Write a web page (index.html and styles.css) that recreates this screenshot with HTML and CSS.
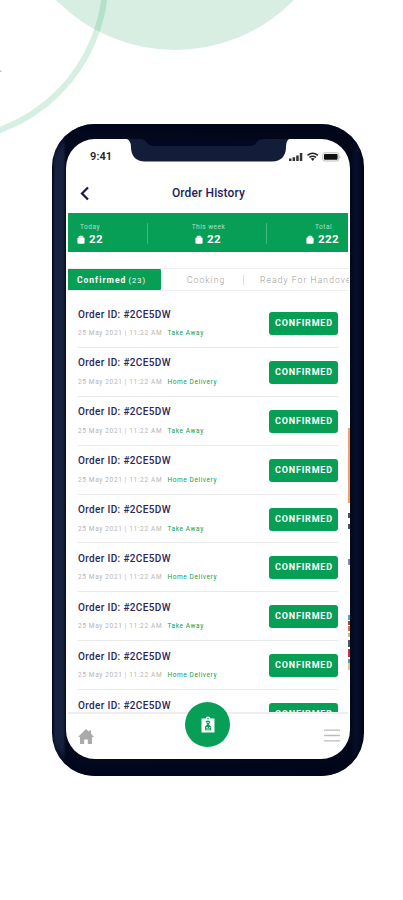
FILE: index.html
```
<!DOCTYPE html>
<html lang="en">
<head>
<meta charset="utf-8">
<title>Order History</title>
<link rel="stylesheet" href="styles.css">
</head>
<body>
<svg class="backdrop" width="403" height="145" viewBox="0 0 403 145">
  <circle cx="175" cy="-116.6" r="166.6" fill="#d8eee3"/>
  <circle cx="-55.5" cy="-21.2" r="161" fill="none" stroke="#079e55" stroke-opacity=".17" stroke-width="6"/>
  <path d="M0 70l2 1.6-2 .5z" fill="#bbb"/>
</svg>
<main class="phone">
  <div class="screen">
    <svg class="notch" width="162" height="23" viewBox="0 0 162 23">
      <path d="M0 0h162q-3 2-3 8c0 9-5 14.500-14 14.500H18C9 22.500 4 17 4 8q0-6-4-8z" fill="#131c38"/>
      <path d="M13 0h125q-7 0-9 4-2 3-6 3H28q-6 0-8-3-2-4-7-4z" fill="#020821"/>
    </svg>
    <div class="status">
      <span class="clock">9:41</span>
      <svg width="52" height="10" viewBox="0 0 52 10">
        <path d="M0 6.500h2.500V9H0zM3.600 5.200h2.500V9H3.600zM7.200 3.500h2.500V9H7.200zM10.800 1h2.500v8h-2.500z" fill="#333"/>
        <path d="M18.500 3.400q5.200-4.300 10.400 0M20.400 5.400q3.300-2.500 6.600 0" fill="none" stroke="#222" stroke-width="1.500"/>
        <path d="M21.700 6.600q2-1.300 4 0l-2 2.400z" fill="#222"/>
        <rect x="33.800" y=".8" width="16" height="8.200" rx="2" fill="#fff" stroke="#aaa" stroke-width=".8"/>
        <rect x="35" y="2" width="13.600" height="5.800" rx="1" fill="#111"/>
        <path d="M50.700 3.500q1.300 1.400 0 2.800z" fill="#777"/>
      </svg>
    </div>
    <header class="title">
      <svg class="back" width="10" height="15" viewBox="0 0 10 15"><path d="M8 1.500L2 7.500l6 6" fill="none" stroke="#1b1646" stroke-width="2.200"/></svg>
      <h1>Order History</h1>
    </header>
    <svg class="defs" width="0" height="0">
      <symbol id="bag" viewBox="0 0 8 9"><path d="M.4 2.800h7.200v4.900q0 1-1 1H1.400q-1 0-1-1z" fill="#fff"/><path d="M1.600 3V1.500Q4-.7 6.400 1.500V3z" fill="#d9f0e4"/></symbol>
    </svg>
    <section class="stats">
      <div class="stat"><small>Today</small><b><svg><use href="#bag"/></svg>22</b></div>
      <div class="stat mid"><small>This week</small><b><svg><use href="#bag"/></svg>22</b></div>
      <div class="stat end"><small>Total</small><b><svg><use href="#bag"/></svg>222</b></div>
    </section>
    <nav class="tabs">
      <div class="tab active">Confirmed <span>(23)</span></div>
      <div class="tab cooking">Cooking</div>
      <div class="tab ready">Ready For Handover</div>
    </nav>
    <section class="orders">
      <article><div><h2>Order ID: #2CE5DW</h2><p>25 May 2021 | 11:22 AM <em>Take Away</em></p></div><span class="badge">CONFIRMED</span></article>
      <article><div><h2>Order ID: #2CE5DW</h2><p>25 May 2021 | 11:22 AM <em>Home Delivery</em></p></div><span class="badge">CONFIRMED</span></article>
      <article><div><h2>Order ID: #2CE5DW</h2><p>25 May 2021 | 11:22 AM <em>Take Away</em></p></div><span class="badge">CONFIRMED</span></article>
      <article><div><h2>Order ID: #2CE5DW</h2><p>25 May 2021 | 11:22 AM <em>Home Delivery</em></p></div><span class="badge">CONFIRMED</span></article>
      <article><div><h2>Order ID: #2CE5DW</h2><p>25 May 2021 | 11:22 AM <em>Take Away</em></p></div><span class="badge">CONFIRMED</span></article>
      <article><div><h2>Order ID: #2CE5DW</h2><p>25 May 2021 | 11:22 AM <em>Home Delivery</em></p></div><span class="badge">CONFIRMED</span></article>
      <article><div><h2>Order ID: #2CE5DW</h2><p>25 May 2021 | 11:22 AM <em>Take Away</em></p></div><span class="badge">CONFIRMED</span></article>
      <article><div><h2>Order ID: #2CE5DW</h2><p>25 May 2021 | 11:22 AM <em>Home Delivery</em></p></div><span class="badge">CONFIRMED</span></article>
      <article><div><h2>Order ID: #2CE5DW</h2></div><span class="badge">CONFIRMED</span></article>
    </section>
    <footer class="bottom">
      <svg width="16" height="15" viewBox="0 0 16 15"><path d="M8 0l3 2.800V1.500h2v3.200L16 8h-2v7H9.800v-4.500H6.200V15H2V8H0z" fill="#aaa"/></svg>
      <svg width="16" height="13" viewBox="0 0 16 13"><path d="M0 1.200h16M0 6.500h16M0 11.800h16" stroke="#bcbcbc" stroke-width="1.300"/></svg>
    </footer>
    <div class="fab">
      <svg width="14" height="17" viewBox="0 0 14 17"><path d="M.5 2.500h4Q5 .5 7 .5t2.500 2h4v14H.5z" fill="#fff"/><circle cx="7" cy="2.700" r=".8" fill="#079e55"/><path d="M4.500 5l2.800-.5L9.500 6 7.800 8.500l2.400 2.300v3.500H4v-3.500l2.200-2.500z" fill="#079e55"/><path d="M6 6.500h2M5 11.500h2M8 11.500h1.500M5 13h4" stroke="#fff" stroke-width=".7"/></svg>
    </div>
    <svg class="edge" width="2" height="242" viewBox="0 0 2 242">
      <path d="M0 0h2v75H0z" fill="#f2a06d"/><path d="M0 85h2v5H0zM0 96h2v5H0z" fill="#48506a"/><path d="M0 131h2v6H0z" fill="#8580bd"/><path d="M0 187h2v5H0z" fill="#3baec3"/><path d="M0 193h2v4H0z" fill="#934b48"/><path d="M0 198h2v5H0z" fill="#d96846"/><path d="M0 205h2v4H0z" fill="#c9ba80"/><path d="M0 212h2v7H0z" fill="#45586d"/><path d="M0 221h2v8H0z" fill="#dc2a3c"/><path d="M0 231h2v4H0z" fill="#5c95a5"/><path d="M0 235h2v7H0z" fill="#d5c99b"/>
    </svg>
  </div>
</main>
</body>
</html>
```
FILE: styles.css
```
* { box-sizing: border-box; }
body { margin: 0; width: 403px; height: 900px; padding: 124px 0 0 52px; background: #fff; font-family: Roboto, sans-serif; overflow: hidden; position: relative; }
.backdrop { position: absolute; left: 0; top: 0; }
.phone { position: relative; width: 312px; height: 652px; padding: 15px 14px 17px; border-radius: 43px; background: linear-gradient(90deg, #020719 0, #18223f 3px, #18223f 11px, #050a1f 14px, #020719 298px, #090f2c 304px, #01051a 312px); box-shadow: inset 0 14px 8px -8px #01061c, inset 0 -16px 8px -8px #01061c; }
.screen { position: relative; height: 620px; border-radius: 29px; background: #fff; overflow: hidden; display: flex; flex-direction: column; }
.notch { position: absolute; left: 61px; top: 0; }
.status { height: 32px; flex: none; padding: 11px 9px 0 24px; display: flex; justify-content: space-between; align-items: flex-start; }
.clock { font-size: 11px; line-height: 14px; font-weight: 600; color: #222; letter-spacing: .1px; }
.status svg { margin-top: 2px; }
.title { height: 42px; flex: none; display: grid; grid-template-columns: 10px 1fr 10px; align-items: center; padding: 1px 13px 0 14px; }
.back { margin-top: 2px; }
.title h1 { margin: 0; text-align: center; font-size: 12px; font-weight: 500; color: #251e59; letter-spacing: .12px; }
.defs { position: absolute; }
.stats { height: 39px; flex: none; margin: 0 2px; padding: 0 9px; background: #079e55; display: grid; grid-template-columns: 70px 120px 1fr; color: #fff; }
.stat { padding-top: 10px; }
.stat small { display: block; font-size: 6.5px; line-height: 8px; opacity: .65; letter-spacing: .5px; padding-left: 3px; }
.stat b { display: flex; align-items: center; gap: 4px; font-size: 11.5px; line-height: 16px; letter-spacing: .4px; }
.stat svg { width: 8px; height: 9px; }
.mid { background: linear-gradient(#45b780, #45b780) 0 10px / 1px 21px no-repeat, linear-gradient(#45b780, #45b780) 100% 10px / 1px 21px no-repeat; text-align: center; }
.mid b { justify-content: center; padding-left: 2px; }
.end { text-align: right; }
.end b { justify-content: flex-end; }
.end small { padding-right: 7px; }
.tabs { height: 23px; flex: none; margin: 16px 1px 0 2px; display: flex; align-items: stretch; border-top: 1px solid #eee; border-bottom: 1px solid #eee; overflow: hidden; white-space: nowrap; color: #999; font-size: 8.5px; line-height: 22px; letter-spacing: 1.1px; font-weight: 300; }
.active { width: 93px; flex: none; margin: -1px 0; padding-left: 9px; border-radius: 0 3px 3px 0; background: #079e55; color: #fff; font-weight: 700; font-size: 8.5px; letter-spacing: 1px; line-height: 24px; }
.active span { font-size: 7.5px; font-weight: 400; margin-left: -1px; }
.cooking { width: 83px; flex: none; padding-left: 26px; background: linear-gradient(#ddd, #ddd) 100% 6px / 1px 10px no-repeat; }
.ready { padding-left: 16px; }
.orders { margin: 8px 12px 0; height: 413px; flex: none; overflow: hidden; }
article { height: 48.9px; display: flex; justify-content: space-between; border-bottom: 1.500px solid #e9e9e9; }
h2 { margin: 8.500px 0 0; font-size: 10px; line-height: 14px; font-weight: 500; color: #2c2759; letter-spacing: .36px; white-space: nowrap; }
p { margin: 6.5px 0 0; font-size: 6.500px; line-height: 10px; color: #b4b4b4; letter-spacing: .65px; white-space: nowrap; }
em { font-style: normal; color: #079e55; margin-left: 3px; letter-spacing: .6px; }
.badge { width: 69px; height: 23px; margin-top: 13px; border-radius: 3px; background: #079e55; color: #fff; font-size: 9px; line-height: 23px; font-weight: 700; text-align: center; letter-spacing: .8px; padding-left: 1px; }
.bottom { height: 47px; margin: 0 2px; flex: none; border-top: 2px solid #eee; display: flex; justify-content: space-between; align-items: flex-start; padding: 15px 8px 0 10px; }
.fab { position: absolute; left: 119px; top: 563px; width: 45px; height: 45px; border-radius: 50%; background: #079e55; display: flex; align-items: center; justify-content: center; }
.edge { position: absolute; right: 0; top: 289px; }
```
